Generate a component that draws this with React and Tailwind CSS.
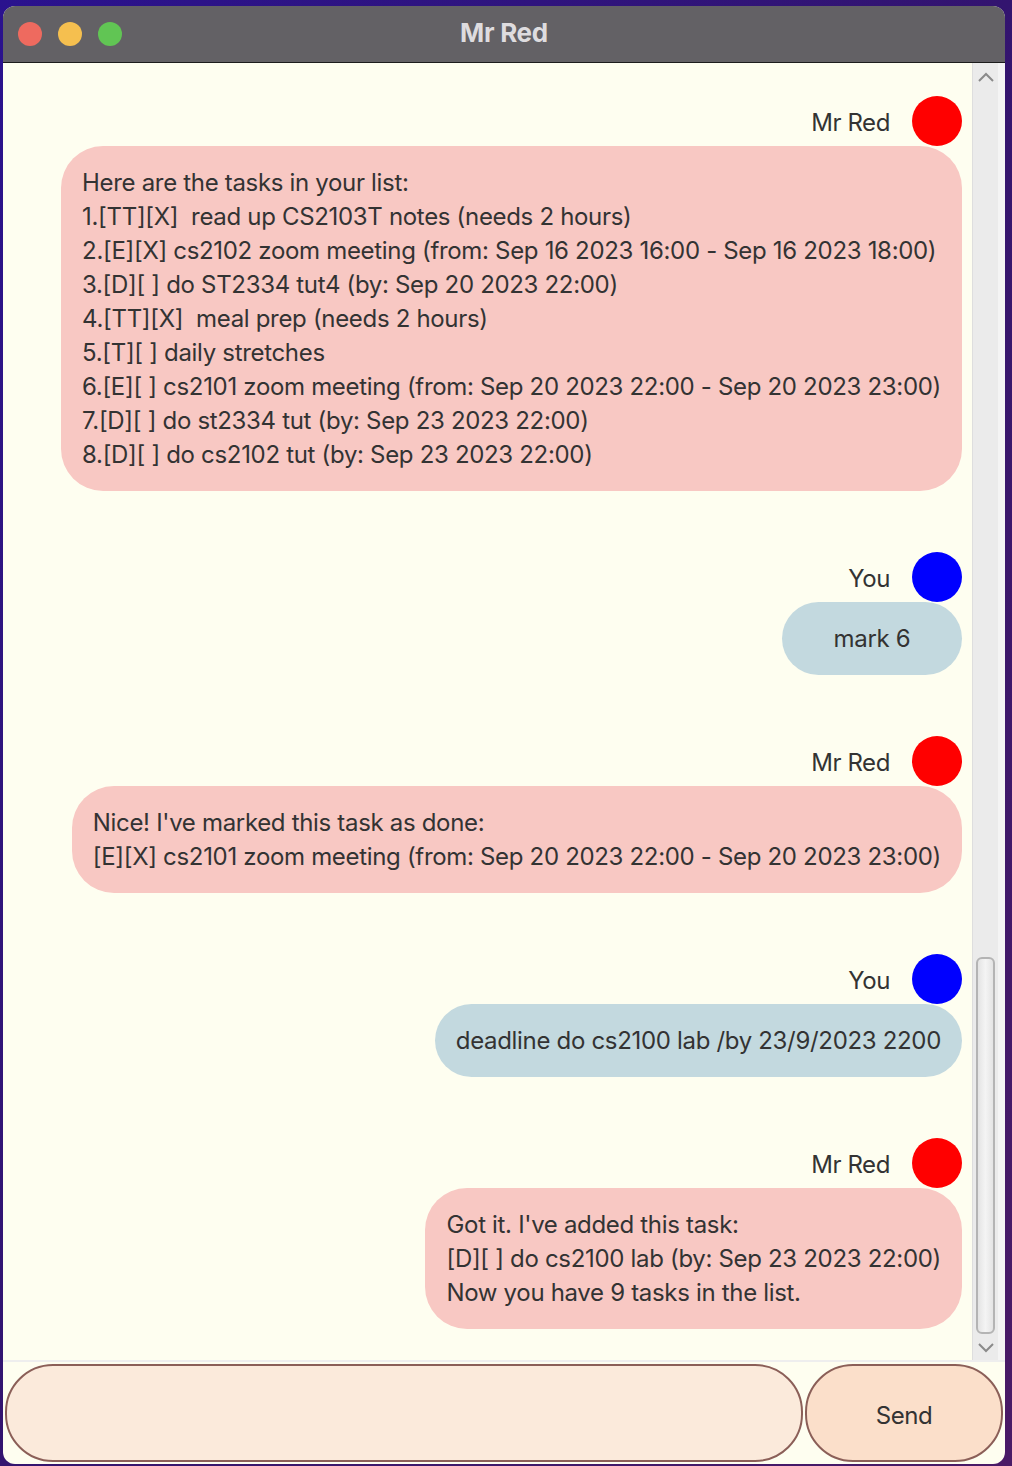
import React from 'react';

const font = { fontFamily: 'Inter, "Noto Sans", sans-serif' };

const dialogs = [
  {
    who: 'Mr Red',
    user: false,
    lines: [
      'Here are the tasks in your list:',
      '1.[TT][X]  read up CS2103T notes (needs 2 hours)',
      '2.[E][X] cs2102 zoom meeting (from: Sep 16 2023 16:00 - Sep 16 2023 18:00)',
      '3.[D][ ] do ST2334 tut4 (by: Sep 20 2023 22:00)',
      '4.[TT][X]  meal prep (needs 2 hours)',
      '5.[T][ ] daily stretches',
      '6.[E][ ] cs2101 zoom meeting (from: Sep 20 2023 22:00 - Sep 20 2023 23:00)',
      '7.[D][ ] do st2334 tut (by: Sep 23 2023 22:00)',
      '8.[D][ ] do cs2102 tut (by: Sep 23 2023 22:00)',
    ],
  },
  { who: 'You', user: true, lines: ['mark 6'] },
  {
    who: 'Mr Red',
    user: false,
    lines: [
      "Nice! I've marked this task as done:",
      '[E][X] cs2101 zoom meeting (from: Sep 20 2023 22:00 - Sep 20 2023 23:00)',
    ],
  },
  { who: 'You', user: true, lines: ['deadline do cs2100 lab /by 23/9/2023 2200'] },
  {
    who: 'Mr Red',
    user: false,
    lines: [
      "Got it. I've added this task:",
      '[D][ ] do cs2100 lab (by: Sep 23 2023 22:00)',
      'Now you have 9 tasks in the list.',
    ],
  },
];

// Một khung hội thoại: tên + avatar, rồi bong bóng
const DialogBox = ({ who, user, lines }) => (
  <div className="flex flex-col items-end">
    <div className="flex items-center h-[50px] gap-[22px]">
      <span className="text-[24px] leading-[34px] text-[#333333] tracking-[-0.4px] pt-[4px]">{who}</span>
      <div className={`w-[50px] h-[50px] rounded-full ${user ? 'bg-[#0000ff]' : 'bg-[#ff0000]'}`} />
    </div>
    <div
      className={`rounded-[42px] px-[21px] py-[19.5px] min-w-[180px] ${
        user ? 'bg-[#c3d9df] text-center' : 'bg-[#f8c8c3]'
      }`}
    >
      {lines.map((l, i) => (
        <div key={i} className="text-[24px] leading-[34px] text-[#333333] tracking-[-0.32px] whitespace-pre">
          {l}
        </div>
      ))}
    </div>
  </div>
);

const App = () => {
  return (
    <div
      className="w-[1012px] h-[1466px] overflow-hidden bg-gradient-to-br from-[#2a128e] via-[#33146f] to-[#4a1a66] pl-[3px] pr-[7px] pt-[6px]"
      style={font}
    >
      <div className="h-[1458px] rounded-[12px] overflow-hidden flex flex-col bg-[#fefef0]">
        {/* Title bar */}
        <div className="relative h-[57px] bg-[#636165] border-b border-[#1c1c1c] flex items-center justify-center shrink-0">
          <div className="absolute left-[15px] top-[16px] flex gap-[16px]">
            <div className="w-[24px] h-[24px] rounded-full bg-[#ee6a5f]" />
            <div className="w-[24px] h-[24px] rounded-full bg-[#f5bf4f]" />
            <div className="w-[24px] h-[24px] rounded-full bg-[#61c554]" />
          </div>
          <span className="text-[26px] font-bold text-[#dedcdf] tracking-[-0.3px] pb-[3px]">Mr Red</span>
        </div>

        {/* Chat area */}
        <div className="flex flex-1 min-h-0">
          <div className="flex-1 flex flex-col gap-[61px] pt-[33px] pr-[10px]">
            {dialogs.map((d, i) => (
              <DialogBox key={i} {...d} />
            ))}
          </div>
          {/* Scrollbar */}
          <div className="w-[33px] flex">
            <div className="w-[26px] bg-[#ebebeb] border-l border-[#dedede] flex flex-col items-center justify-between pt-[6px] pb-[6px]">
              <svg width="18" height="12" viewBox="0 0 18 12" className="mt-[2px]">
                <path d="M2 10 L9 3 L16 10" fill="none" stroke="#8a8a8a" strokeWidth="2" />
              </svg>
              <div className="flex-1 w-full flex flex-col justify-end px-[3px] pb-[8px]">
                <div className="h-[377px] rounded-[6px] border-2 border-[#b4b4b4] bg-gradient-to-r from-[#e4e4e4] via-[#f4f4f4] to-[#e4e4e4]" />
              </div>
              <svg width="18" height="12" viewBox="0 0 18 12">
                <path d="M2 2 L9 9 L16 2" fill="none" stroke="#8a8a8a" strokeWidth="2" />
              </svg>
            </div>
            <div className="flex-1 bg-[#f4f4f4]" />
          </div>
        </div>

        {/* Input bar */}
        <div className="h-[104px] shrink-0 border-t-2 border-[#eeeeee] flex gap-[2px] px-[2px] pt-[2px] pb-[2px]">
          <div className="flex-1 rounded-[48px] border-2 border-[#8b5f58] bg-[#fbeadb]" />
          <button className="w-[198px] rounded-[48px] border-2 border-[#8b5f58] bg-[#fbdfca] text-[24px] text-[#333333] tracking-[-0.4px] pt-[5px]">
            Send
          </button>
        </div>
      </div>
    </div>
  );
};

export default App;
